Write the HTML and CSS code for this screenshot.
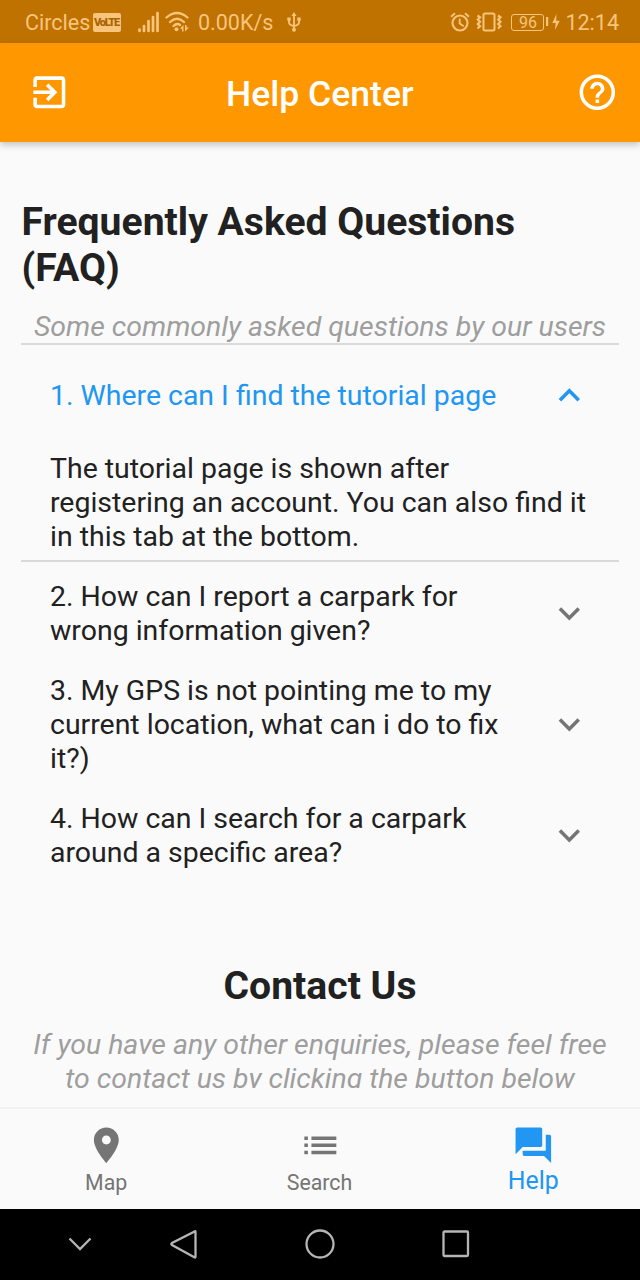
FILE: index.html
```html
<!DOCTYPE html>
<html lang="en">
<head>
<meta charset="utf-8">
<title>Help Center</title>
<link rel="stylesheet" href="styles.css">
</head>
<body>
<div class="screen">
  <div class="status">
    <span class="carrier">Circles</span>
    <span class="volte">VoLTE</span>
    <svg class="signal" width="22" height="22" viewBox="0 0 22 22"><path d="M1.500 20v-1.500M6 20v-5M10.500 20V10M15 20V6M19.500 20V2" stroke="currentColor" stroke-width="2.700" fill="none" stroke-linecap="round"/></svg>
    <svg class="wifi" width="24" height="22" viewBox="0 0 24 22"><path d="M1.500 6.500Q12-2.500 22.500 6.500M5 11Q12 4.500 19 11M8.500 15Q12 11.500 15 14" fill="none" stroke="currentColor" stroke-width="2.300" stroke-linecap="round"/><circle cx="11.500" cy="18.300" r="2" fill="currentColor"/><path d="M15 17.500l3.500-3.500v6.500h-1.500v-2.500zM20 14h1.500v2.500H24l-4 4z" fill="currentColor"/></svg>
    <span class="speed">0.00K/s</span>
    <svg class="usb" width="14" height="22" viewBox="0 0 14 22"><path d="M7 3v16M2 8v3.500Q2 14 7 15M12 8v3.500Q12 14 7 15" fill="none" stroke="currentColor" stroke-width="1.800"/><path d="M7 1l2.500 4h-5zM.3 6.500h3.400v3.200H.3zM10.300 6.500h3.400v3.200h-3.400z" fill="currentColor"/><circle cx="7" cy="18.700" r="2" fill="currentColor"/></svg>
    <svg class="alarm" width="20" height="20" viewBox="0 0 20 20"><g fill="none" stroke="currentColor" stroke-width="2.100"><circle cx="10" cy="11" r="7.500"/><path d="M9.700 6.500v5l4 2.800M1 4.800L5 1.200M15 1.200l4 3.600" stroke-width="1.900"/></g></svg>
    <svg class="vibrate" width="26" height="20" viewBox="0 0 26 20"><g fill="none" stroke="currentColor"><rect x="7.500" y="1.500" width="11" height="17" rx="1.500" stroke-width="2"/><path d="M1.500 3.500L4 5.300 1.800 7.500 4 9.700 1.800 12 4 14.200 1.500 16.500M22 3.500l2.500 1.800L22.300 7.500l2.200 2.200-2.200 2.300 2.200 2.200-2.500 2.300" stroke-width="2.200"/></g></svg>
    <span class="battery">96</span>
    <svg class="charge" width="14" height="20" viewBox="0 0 14 20"><path d="M0 5h2.200v9H0zM10.500 2L6.300 11h3.400L9 18 13.700 8.800h-3.500z" fill="currentColor"/></svg>
    <span class="time">12:14</span>
  </div>
  <header class="appbar">
    <svg class="icon" viewBox="0 0 24 24"><path d="M10.090 15.590L11.500 17l5-5-5-5-1.410 1.410L12.670 11H3v2h9.670l-2.580 2.590zM19 3H5c-1.110 0-2 .9-2 2v4h2V5h14v14H5v-4H3v4c0 1.100.89 2 2 2h14c1.100 0 2-.9 2-2V5c0-1.100-.9-2-2-2z"/></svg>
    <h1 class="title">Help Center</h1>
    <svg class="icon" viewBox="0 0 24 24"><path d="M11 18h2v-2h-2v2zm1-16C6.480 2 2 6.480 2 12s4.480 10 10 10 10-4.480 10-10S17.520 2 12 2zm0 18c-4.410 0-8-3.590-8-8s3.590-8 8-8 8 3.590 8 8-3.590 8-8 8zm0-14c-2.210 0-4 1.790-4 4h2c0-1.100.9-2 2-2s2 .9 2 2c0 2-3 1.750-3 5h2c0-2.250 3-2.500 3-5 0-2.210-1.790-4-4-4z"/></svg>
  </header>
  <main class="content">
    <h2 class="heading">Frequently Asked Questions (FAQ)</h2>
    <p class="note">Some commonly asked questions by our users</p>
    <section class="faq-open">
      <div class="question active"><span class="q-text">1. Where can I find the tutorial page</span><svg class="icon" viewBox="0 0 24 24"><path d="M12 8l-6 6 1.410 1.410L12 10.830l4.590 4.580L18 14z"/></svg></div>
      <p class="answer">The tutorial page is shown after<br>registering an account. You can also find it<br>in this tab at the bottom.</p>
    </section>
    <section class="faq-list">
      <div class="question"><span class="q-text">2. How can I report a carpark for<br>wrong information given?</span><svg class="icon" viewBox="0 0 24 24"><path d="M16.590 8.590L12 13.170 7.410 8.590 6 10l6 6 6-6z"/></svg></div>
      <div class="question"><span class="q-text">3. My GPS is not pointing me to my<br>current location, what can i do to fix<br>it?)</span><svg class="icon" viewBox="0 0 24 24"><path d="M16.590 8.590L12 13.170 7.410 8.590 6 10l6 6 6-6z"/></svg></div>
      <div class="question"><span class="q-text">4. How can I search for a carpark<br>around a specific area?</span><svg class="icon" viewBox="0 0 24 24"><path d="M16.590 8.590L12 13.170 7.410 8.590 6 10l6 6 6-6z"/></svg></div>
    </section>
    <h2 class="heading centered">Contact Us</h2>
    <p class="note">If you have any other enquiries, please feel free<br>to contact us by clicking the button below</p>
  </main>
  <nav class="tabs">
    <div class="tab"><svg class="icon" viewBox="0 0 24 24"><path d="M12 2C8.130 2 5 5.130 5 9c0 5.250 7 13 7 13s7-7.750 7-13c0-3.870-3.130-7-7-7zm0 9.500c-1.380 0-2.500-1.120-2.500-2.500s1.120-2.500 2.500-2.500 2.500 1.120 2.500 2.500-1.120 2.500-2.500 2.500z"/></svg><span class="label">Map</span></div>
    <div class="tab"><svg class="icon" viewBox="0 0 24 24"><path d="M3 13h2v-2H3v2zm0 4h2v-2H3v2zm0-8h2V7H3v2zm4 4h14v-2H7v2zm0 4h14v-2H7v2zM7 7v2h14V7H7z"/></svg><span class="label">Search</span></div>
    <div class="tab selected"><svg class="icon" viewBox="0 0 24 24"><path d="M21 6h-2v9H6v2c0 .55.45 1 1 1h11l4 4V7c0-.55-.45-1-1-1zm-4 6V3c0-.55-.45-1-1-1H3c-.55 0-1 .45-1 1v14l4-4h10c.55 0 1-.45 1-1z"/></svg><span class="label">Help</span></div>
  </nav>
  <div class="sysnav">
    <svg width="24" height="30" viewBox="0 0 24 30"><path d="M1.500 9.500L12 20 22.500 9.500"/></svg>
    <svg width="28" height="32" viewBox="0 0 28 32"><path d="M25.500 3.500Q26.500 2.500 26.500 4V28.500Q26.500 30 25.300 29.200L3 17Q1.700 16 3 15z"/></svg>
    <svg width="30" height="30" viewBox="0 0 30 30"><circle cx="15" cy="15" r="13.500"/></svg>
    <svg width="28" height="28" viewBox="0 0 28 28"><rect x="1.500" y="1.500" width="24.500" height="24.500" rx="1"/></svg>
  </div>
</div>
</body>
</html>
```
FILE: styles.css
```css
* { box-sizing: border-box; }
body { margin: 0; font-family: Roboto, "Liberation Sans", sans-serif; background: #fafafa; }
h1, h2, p { margin: 0; }
.screen { width: 640px; height: 1280px; display: flex; flex-direction: column; overflow: hidden; }
.icon { width: 42.67px; height: 42.67px; fill: currentColor; flex: none; display: block; }

.status { height: 43px; flex: none; background: #bf7200; color: #f8c47c; display: flex; align-items: center; padding: 1px 21px 0 25px; font-size: 21.500px; white-space: nowrap; }
.status svg { flex: none; display: block; }
.carrier { width: 68px; }
.volte { width: 28px; height: 19px; border-radius: 2px; background: #f8c47c; color: #a96300; font-size: 11px; font-weight: 900; line-height: 19px; display: flex; justify-content: center; letter-spacing: -1.200px; padding-right: 1px; }
.signal { margin-left: 17px; }
.wifi { margin-left: 5px; }
.speed { margin-left: 9px; width: 76px; }
.usb { margin-left: 13px; }
.alarm { margin-left: auto; }
.vibrate { margin-left: 6px; }
.battery { margin-left: 9px; width: 33px; height: 17px; border: 1.500px solid #f8c47c; border-radius: 3px; font-size: 16px; line-height: 15px; text-align: center; }
.charge { margin-left: 2px; }
.time { margin-left: 5px; }

.appbar { height: 99px; flex: none; background: #ff9800; color: #fff; display: flex; align-items: center; justify-content: space-between; padding: 0 21.500px 0 28px; box-shadow: 0 3px 7px rgba(0,0,0,.22); z-index: 1; }
.title { font-size: 35.560px; font-weight: 500; line-height: 42px; padding-top: 2px; margin-left: -7px; }

.content { height: 946px; flex: none; overflow: hidden; padding: 57px 21px 0; color: #212121; }
.heading { font-size: 39.110px; font-weight: 700; line-height: 46px; padding-left: 0.500px; }
.centered { text-align: center; margin-top: 81px; padding: 0; }
.note { margin-top: 18px; padding-top: 1px; font-size: 28.440px; line-height: 34px; font-style: italic; color: #9e9e9e; text-align: center; white-space: nowrap; }
.faq-open { margin-top: -1px; border-top: 2px solid #dadada; border-bottom: 2px solid #dadada; padding: 20px 0 6px; }
.question { display: flex; align-items: center; justify-content: space-between; padding: 13px 28.500px 13px 29px; font-size: 28.440px; line-height: 34px; white-space: nowrap; }
.q-text { padding-top: 2px; margin-bottom: -2px; }
.question .icon { margin: -5px 0; color: #757575; }
.active .q-text { padding-top: 1px; margin-bottom: -1px; }
.active, .question.active .icon { color: #2196f3; }
.answer { padding: 27px 0 0 29px; font-size: 28.440px; line-height: 34px; white-space: nowrap; }
.faq-list { padding-top: 4px; }
.faq-list .q-text { padding-top: 1px; margin-bottom: -1px; }

.tabs { height: 102px; flex: none; margin-top: 19px; border-top: 2px solid #f2f2f2; display: flex; color: #757575; }
.tab { flex: 1; display: flex; flex-direction: column; align-items: center; padding: 14.500px 0 0; }
.label { font-size: 21.330px; line-height: 25px; margin-top: 4px; margin-left: -1px; }
.selected { color: #2196f3; }
.selected .label { font-size: 24.890px; line-height: 29px; margin: 0; }

.sysnav { height: 71px; flex: none; background: #000; display: flex; align-items: center; padding: 0 0 1px 68px; }
.sysnav svg { fill: none; stroke: #b5b5b5; stroke-width: 2.300; }
.sysnav svg:nth-child(2) { margin-left: 77px; }
.sysnav svg:nth-child(3) { margin-left: 108px; }
.sysnav svg:nth-child(4) { margin-left: 107px; }
```
